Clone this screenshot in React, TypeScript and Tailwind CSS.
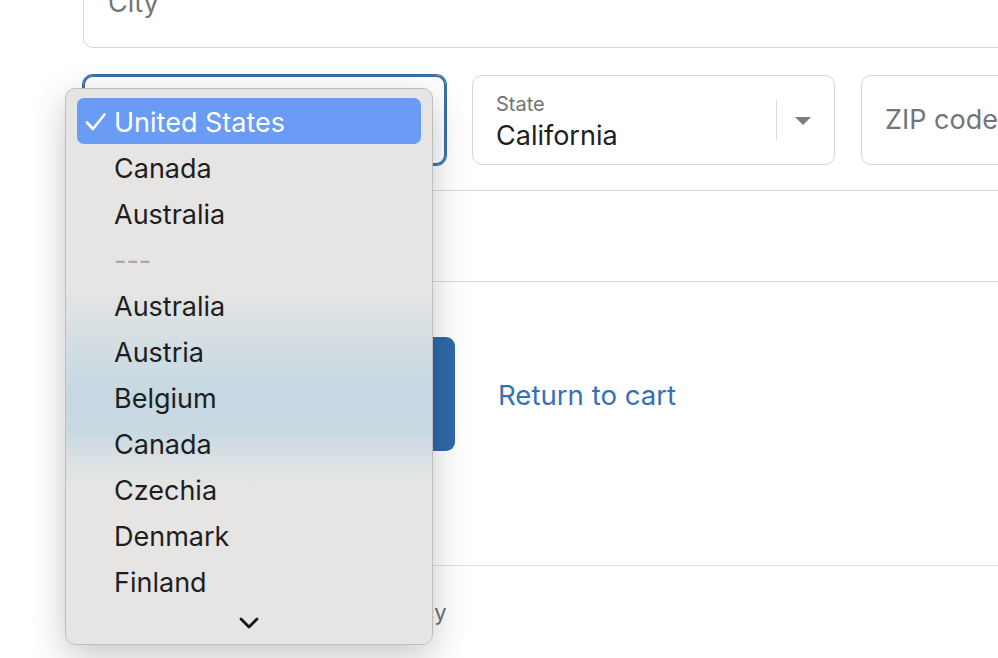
import React from "react";

const countries = [
  "Canada",
  "Australia",
  "---",
  "Australia",
  "Austria",
  "Belgium",
  "Canada",
  "Czechia",
  "Denmark",
  "Finland",
];

export default function App() {
  return (
    <div className="relative w-[998px] h-[658px] overflow-hidden bg-white font-['Inter',sans-serif]">
      <CheckoutForm />
      <CountryMenu />
    </div>
  );
}

const CheckoutForm = () => {
  return (
    <div className="w-[1260px] pl-[83px] -mt-[42px] flex flex-col">
      {/* City */}
      <div className="h-[90px] border border-[#d6d6d6] rounded-[10px] flex items-center px-[24px]">
        <span className="text-[27px] text-[#757575]">City</span>
      </div>

      {/* Country / State / ZIP */}
      <div className="mt-[27px] grid grid-cols-[363px_363px_363px] gap-[26px]">
        <div className="h-[90px] border-2 border-[#3c6fae] ring-1 ring-[#3c6fae] rounded-[10px]" />
        <div className="h-[90px] border border-[#d6d6d6] rounded-[10px] flex items-center pl-[23px] pr-[22px]">
          <div className="flex-1 flex flex-col mt-[5px]">
            <span className="text-[20px] leading-[24px] text-[#737373]">State</span>
            <span className="mt-[3px] text-[27px] leading-[34px] text-[#202020]">California</span>
          </div>
          <div className="w-px h-[40px] bg-[#dcdcdc]" />
          <svg width="18" height="10" viewBox="0 0 18 10" className="ml-[17px] mt-[2px]">
            <path d="M1 1 L17 1 L9 9 Z" fill="#7d7d7d" />
          </svg>
        </div>
        <div className="h-[90px] border border-[#d6d6d6] rounded-[10px] flex items-center px-[23px]">
          <span className="text-[27px] text-[#757575]">ZIP code</span>
        </div>
      </div>

      <div className="mt-[25px] h-px bg-[#d9d9d9]" />
      <div className="h-[90px]" />
      <div className="h-px bg-[#d9d9d9]" />

      {/* actions */}
      <div className="mt-[55px] flex items-center gap-[43px]">
        <button className="w-[372px] h-[114px] rounded-[9px] bg-[#2f6aab] text-white text-[27px] font-semibold">
          Continue to shipping
        </button>
        <a className="pt-[4px] text-[27.6px] text-[#3572b5]">Return to cart</a>
      </div>

      <div className="mt-[114px] h-px bg-[#dedede]" />
      <div className="mt-[30px] flex gap-[62px] text-[22px] text-[#707070]">
        <span>Refund policy</span>
        <span>Shipping policy</span>
      </div>
    </div>
  );
};

const CountryMenu = () => {
  return (
    <div className="absolute left-[65px] top-[88px] w-[368px] h-[557px] rounded-[10px] border border-[#bdbdbd] shadow-[0_12px_36px_rgba(0,0,0,0.22)] bg-[linear-gradient(180deg,#e6e5e4_0%,#e6e5e4_36%,#d3dee2_46%,#c6d8e2_55%,#c9d9e2_62%,#dfe2e3_68%,#e6e5e4_72%,#e6e5e4_100%)] px-[11px] pt-[9px] text-[27px]">
      <div className="h-[46px] pt-[4px] rounded-[7px] bg-[#6a9cf6] flex items-center text-white">
        <svg width="22" height="20" viewBox="0 0 22 20" className="ml-[8px] mr-[7px] -mt-[2px]">
          <path d="M2 10.5 L8 17 L19.5 2.5" fill="none" stroke="white" strokeWidth="2.6" strokeLinecap="round" strokeLinejoin="round" />
        </svg>
        <span>United States</span>
      </div>
      {countries.map((c, i) =>
        c === "---" ? (
          <div key={i} className="h-[46px] pt-[4px] flex items-center pl-[37px] text-[#a8a8a8]">
            ---
          </div>
        ) : (
          <div key={i} className="h-[46px] pt-[4px] flex items-center pl-[37px] text-[#1e1e1e]">
            {c}
          </div>
        )
      )}
      <div className="h-[36px] pt-[2px] flex items-center justify-center">
        <svg width="20" height="12" viewBox="0 0 20 12">
          <path d="M2 2 L10 10 L18 2" fill="none" stroke="#111" strokeWidth="2.8" strokeLinecap="round" strokeLinejoin="round" />
        </svg>
      </div>
    </div>
  );
};
